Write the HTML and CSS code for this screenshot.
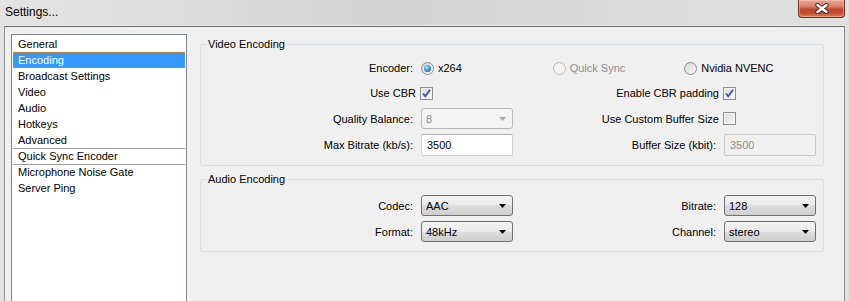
FILE: index.html
```html
<!DOCTYPE html>
<html lang="en">
<head>
    <meta charset="UTF-8">
    <title>Settings...</title>
    <link rel="stylesheet" href="styles.css">
</head>
<body>
    <div class="window">
        <div class="titlebar">
            <span class="title">Settings...</span>
            <span class="close">
                <svg width="14" height="11" viewBox="0 0 14 11">
                    <path d="M2.5 2 L11.5 9 M11.5 2 L2.5 9" stroke="#4a2a24" stroke-width="4.4" stroke-linecap="round"/>
                    <path d="M2.5 2 L11.5 9 M11.5 2 L2.5 9" stroke="#ffffff" stroke-width="2.4" stroke-linecap="round"/>
                </svg>
            </span>
        </div>

        <div class="frame">
            <ul class="nav">
                <li>General</li>
                <li class="active">Encoding</li>
                <li>Broadcast Settings</li>
                <li>Video</li>
                <li>Audio</li>
                <li>Hotkeys</li>
                <li>Advanced</li>
                <li class="sep">Quick Sync Encoder</li>
                <li class="sep">Microphone Noise Gate</li>
                <li>Server Ping</li>
            </ul>

            <div class="panel">
                <fieldset class="group">
                    <legend>Video Encoding</legend>
                    <div class="grid video-grid">
                        <span class="lbl">Encoder:</span>
                        <div class="radios">
                            <span class="opt"><span class="radio on"></span>x264</span>
                            <span class="opt disabled"><span class="radio"></span>Quick Sync</span>
                            <span class="opt"><span class="radio"></span>Nvidia NVENC</span>
                        </div>

                        <span class="lbl chk-lbl">Use CBR</span>
                        <span class="check on">
                            <svg width="11" height="11" viewBox="0 0 11 11"><path d="M2 5.5 L4.3 8.3 L9 1.8" fill="none" stroke="#40569c" stroke-width="1.9"/></svg>
                        </span>
                        <span class="lbl chk-lbl">Enable CBR padding</span>
                        <span class="check on">
                            <svg width="11" height="11" viewBox="0 0 11 11"><path d="M2 5.5 L4.3 8.3 L9 1.8" fill="none" stroke="#40569c" stroke-width="1.9"/></svg>
                        </span>

                        <span class="lbl">Quality Balance:</span>
                        <div class="combo disabled">
                            <span>8</span>
                            <svg width="7" height="4" viewBox="0 0 7 4"><path d="M0 0 H7 L3.5 4 Z" fill="#a8a8a8"/></svg>
                        </div>
                        <span class="lbl chk-lbl">Use Custom Buffer Size</span>
                        <span class="check"></span>

                        <span class="lbl">Max Bitrate (kb/s):</span>
                        <input class="field" type="text" value="3500">
                        <span class="lbl">Buffer Size (kbit):</span>
                        <input class="field" type="text" value="3500" disabled>
                    </div>
                </fieldset>

                <fieldset class="group audio">
                    <legend>Audio Encoding</legend>
                    <div class="grid audio-grid">
                        <span class="lbl">Codec:</span>
                        <div class="combo">
                            <span>AAC</span>
                            <svg width="7" height="4" viewBox="0 0 7 4"><path d="M0 0 H7 L3.5 4 Z" fill="#000"/></svg>
                        </div>
                        <span class="lbl">Bitrate:</span>
                        <div class="combo">
                            <span>128</span>
                            <svg width="7" height="4" viewBox="0 0 7 4"><path d="M0 0 H7 L3.5 4 Z" fill="#000"/></svg>
                        </div>

                        <span class="lbl">Format:</span>
                        <div class="combo">
                            <span>48kHz</span>
                            <svg width="7" height="4" viewBox="0 0 7 4"><path d="M0 0 H7 L3.5 4 Z" fill="#000"/></svg>
                        </div>
                        <span class="lbl">Channel:</span>
                        <div class="combo">
                            <span>stereo</span>
                            <svg width="7" height="4" viewBox="0 0 7 4"><path d="M0 0 H7 L3.5 4 Z" fill="#000"/></svg>
                        </div>
                    </div>
                </fieldset>
            </div>
        </div>
    </div>
</body>
</html>
```

FILE: styles.css
```css
html, body {
    margin: 0;
    padding: 0;
}
body {
    font-family: "Liberation Sans", Arial, sans-serif;
    font-size: 11px;
    color: #000;
}
.window {
    width: 849px;
    height: 301px;
    overflow: hidden;
    display: flex;
    flex-direction: column;
    background: linear-gradient(to right, #e3e3e3, #d8d8d8 35%, #d4d4d4 45%, #dadada 70%, #e0e0e0);
}
.titlebar {
    height: 25px;
    border-bottom: 1px solid #e9e9e9;
    display: flex;
    justify-content: space-between;
    align-items: flex-start;
    flex-shrink: 0;
}
.title {
    font-size: 12px;
    line-height: 14px;
    margin: 5px 0 0 5px;
    color: #000;
}
.close {
    width: 45px;
    height: 17px;
    margin-right: 4px;
    border: 1px solid #6b2a1f;
    border-top: none;
    border-radius: 0 0 4px 4px;
    background: linear-gradient(to bottom, #e8a898 0%, #d98671 35%, #c2462d 55%, #c14a2e 75%, #d9805c 100%);
    box-shadow: inset 0 0 0 1px rgba(255, 210, 190, 0.45);
    display: flex;
    align-items: center;
    justify-content: center;
}
.frame {
    flex: 1;
    margin: 0 4px;
    border: 1px solid #8d9096;
    border-top-color: #6b6b6b;
    border-bottom: none;
    background: #f0f0f0;
    display: flex;
    align-items: flex-start;
    padding: 7px 0 0 6px;
}
.nav {
    list-style: none;
    margin: 0;
    padding: 1px 0 0;
    width: 174px;
    height: 300px;
    border: 1px solid #828790;
    background: #fff;
    flex-shrink: 0;
}
.nav li {
    height: 16px;
    line-height: 16px;
    padding-left: 5px;
    margin: 0 1px;
    white-space: nowrap;
}
.nav li.sep {
    box-sizing: border-box;
    border-top: 1px solid #a0a0a0;
    line-height: 15px;
}
.nav li.active {
    background: #3399ff;
    color: #fff;
    outline: 1px dotted #c8893e;
    outline-offset: -1px;
}
.panel {
    margin-left: 13px;
    padding-top: 4px;
}
.group {
    margin: 0;
    padding: 7px 7px 9px 0;
    box-sizing: border-box;
    width: 624px;
    border: 1px solid #d5dfe5;
    border-radius: 3px;
}
.group legend {
    line-height: 13px;
    margin-left: 5px;
    padding: 0 2px;
}
.group.audio {
    margin-top: 7px;
    padding-top: 9px;
}
.grid {
    display: grid;
    grid-template-columns: 212px 92px 1fr 92px;
    column-gap: 8px;
    row-gap: 5px;
    align-items: center;
}
.video-grid {
    grid-template-rows: 20px 20px 21px 22px;
}
.audio-grid {
    grid-template-rows: 21px 21px;
}
.lbl {
    text-align: right;
    white-space: nowrap;
}
.chk-lbl {
    margin-right: -3px;
}
.radios {
    grid-column: 2 / 5;
    display: flex;
}
.opt {
    width: 132px;
    display: flex;
    align-items: center;
    white-space: nowrap;
}
.opt.disabled {
    color: #8d8d8d;
}
.radio {
    width: 11px;
    height: 11px;
    border: 1px solid #8a8c8f;
    border-radius: 50%;
    margin-right: 4px;
    background: linear-gradient(to bottom right, #d6d6d6, #fbfbfb);
    display: flex;
    align-items: center;
    justify-content: center;
}
.opt.disabled .radio {
    border-color: #bcbcbc;
    background: #f4f4f4;
}
.radio.on::after {
    content: "";
    width: 7px;
    height: 7px;
    border-radius: 50%;
    background: radial-gradient(circle at 40% 35%, #b9ecff 0%, #3c9ad8 45%, #124c85 100%);
}
.check {
    width: 11px;
    height: 11px;
    margin-left: -1px;
    border: 1px solid #8e8f8f;
    background: linear-gradient(to bottom right, #dcdcdc, #f8f8f8);
    box-shadow: inset 0 0 0 1px #f4f4f4;
    display: flex;
    align-items: center;
    justify-content: center;
}
.combo {
    box-sizing: border-box;
    height: 21px;
    border: 1px solid #707070;
    border-radius: 3px;
    background: linear-gradient(to bottom, #f2f2f2 0%, #ebebeb 50%, #dddddd 50%, #cfcfcf 100%);
    display: flex;
    align-items: center;
    justify-content: space-between;
    padding: 0 6px 0 4px;
}
.combo.disabled {
    border-color: #b9b9b9;
    background: #f4f4f4;
    color: #8d8d8d;
}
.field {
    box-sizing: border-box;
    width: 92px;
    height: 22px;
    margin: 0;
    border: 1px solid #cfd2d6;
    border-top-color: #abadb3;
    border-radius: 2px;
    padding: 0 0 0 5px;
    font: inherit;
    color: #000;
    background: #fff;
    outline: none;
}
.field:disabled {
    background: #f0f0f0;
    border-color: #c9c9c9;
    color: #8d8d8d;
}
```
